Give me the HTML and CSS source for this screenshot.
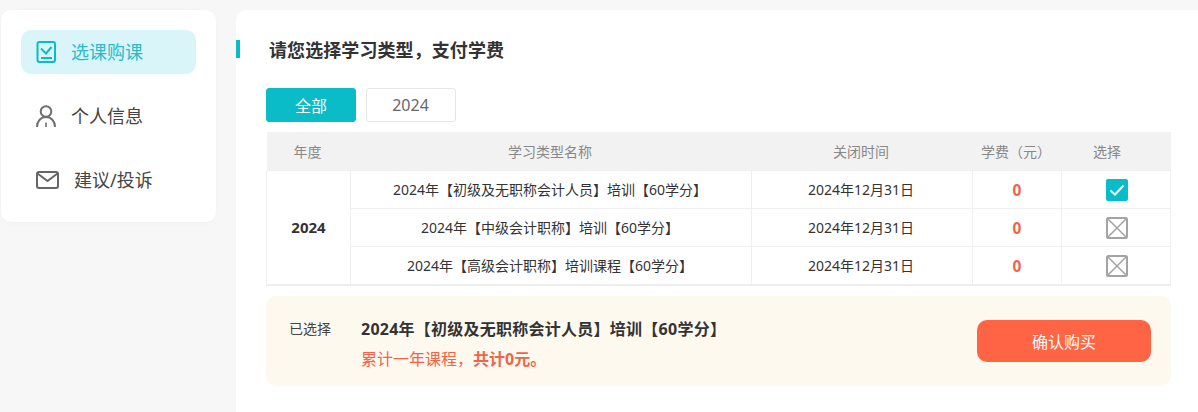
FILE: index.html
```html
<!DOCTYPE html>
<html lang="zh-CN">
<head>
<meta charset="utf-8">
<title>选课购课</title>
<link rel="stylesheet" href="styles.css">
</head>
<body>
<div class="page">
  <aside class="sidebar">
    <a class="nav-item active">
      <svg class="nav-icon" width="20" height="22" viewBox="0 0 20 22" fill="none" stroke="#0abbc8" stroke-width="2"><rect x="1.500" y="1" width="17.500" height="20" rx="2"/><path d="M5 7.500l5 5 5.500-6.500"/><path d="M5 17h11"/></svg>
      <span>选课购课</span>
    </a>
    <a class="nav-item">
      <svg class="nav-icon" width="20" height="22" viewBox="0 0 20 22" fill="none" stroke="#707070" stroke-width="2"><circle cx="10" cy="6.500" r="5.300"/><path d="M1 22C1 16 5 12 10 12s9 4 9 10"/><path d="M10 17.500V22" stroke-width="1.600"/></svg>
      <span>个人信息</span>
    </a>
    <a class="nav-item">
      <svg class="nav-icon" width="23" height="18" viewBox="0 0 23 18" fill="none" stroke="#666" stroke-width="2"><rect x="1" y="1" width="21" height="16" rx="2"/><path d="M1.500 2.500l10 7.500 10-7.500"/></svg>
      <span>建议/投诉</span>
    </a>
  </aside>
  <main class="content">
    <h2 class="title">请您选择学习类型，支付学费</h2>
    <div class="tabs">
      <button class="tab tab-on">全部</button>
      <button class="tab tab-year">2024</button>
    </div>
    <table class="grid">
      <colgroup>
        <col class="c-year"><col class="c-name"><col class="c-time"><col class="c-fee"><col class="c-pick">
      </colgroup>
      <thead>
        <tr><th>年度</th><th>学习类型名称</th><th>关闭时间</th><th>学费（元）</th><th class="th-pick">选择</th></tr>
      </thead>
      <tbody>
        <tr>
          <td rowspan="3" class="year">2024</td>
          <td>2024年【初级及无职称会计人员】培训【60学分】</td>
          <td>2024年12月31日</td>
          <td class="fee">0</td>
          <td class="pick"><svg width="22" height="22" viewBox="0 0 22 22"><rect width="22" height="22" rx="2" fill="#0abbc8"/><path d="M4.500 11.500l4.500 4 8.500-9" fill="none" stroke="#fff" stroke-width="2"/></svg></td>
        </tr>
        <tr>
          <td>2024年【中级会计职称】培训【60学分】</td>
          <td>2024年12月31日</td>
          <td class="fee">0</td>
          <td class="pick"><svg width="22" height="22" viewBox="0 0 22 22" fill="none" stroke="#a3a3a3"><rect x="1" y="1" width="20" height="20" rx="1.500" stroke-width="2"/><path d="M1.500 1.500l19 19M20.500 1.500l-19 19" stroke-width="1.500"/></svg></td>
        </tr>
        <tr>
          <td>2024年【高级会计职称】培训课程【60学分】</td>
          <td>2024年12月31日</td>
          <td class="fee">0</td>
          <td class="pick"><svg width="22" height="22" viewBox="0 0 22 22" fill="none" stroke="#a3a3a3"><rect x="1" y="1" width="20" height="20" rx="1.500" stroke-width="2"/><path d="M1.500 1.500l19 19M20.500 1.500l-19 19" stroke-width="1.500"/></svg></td>
        </tr>
      </tbody>
    </table>
    <section class="summary">
      <div class="sum-label">已选择</div>
      <div class="sum-body">
        <div class="sum-name">2024年【初级及无职称会计人员】培训【60学分】</div>
        <div class="sum-note">累计一年课程，<b>共计0元。</b></div>
      </div>
      <button class="buy">确认购买</button>
    </section>
  </main>
</div>
</body>
</html>
```
FILE: styles.css
```css
* { box-sizing: border-box; }
html, body { margin: 0; padding: 0; }
body {
  width: 1198px;
  height: 412px;
  overflow: hidden;
  background: #f7f7f7;
  font-family: "Noto Sans", "Noto Sans CJK SC", sans-serif;
  color: #333;
}
.page {
  display: flex;
  align-items: flex-start;
  gap: 20px;
  padding: 10px 0 0 1px;
}
.sidebar {
  width: 215px;
  height: 212px;
  flex: none;
  background: #fff;
  border-radius: 10px;
  padding: 20px;
  display: flex;
  flex-direction: column;
  gap: 20px;
  box-shadow: 0 1px 4px rgba(0,0,0,.03);
}
.nav-item {
  width: 175px;
  height: 44px;
  flex: none;
  display: flex;
  align-items: center;
  gap: 15px;
  padding-left: 15px;
  border-radius: 10px;
  font-size: 18px;
  color: #444;
}
.nav-item span { padding-bottom: 2px; }
.nav-item.active { background: #d9f5fa; color: #2bbcc8; }
.nav-icon { flex: none; }
.content {
  width: 962px;
  height: 402px;
  flex: none;
  background: #fff;
  border-radius: 10px 0 0 0;
  padding: 30px 27px 0 30px;
}
.title {
  margin: 0;
  position: relative;
  height: 20px;
  line-height: 20px;
  font-size: 18px;
  font-weight: 700;
  letter-spacing: .08px;
  color: #333;
  padding-left: 3px;
}
.title::before {
  content: "";
  position: absolute;
  left: -30px;
  top: 0;
  width: 4px;
  height: 18px;
  background: #0abbc8;
}
.tabs {
  display: flex;
  gap: 10px;
  margin-top: 28px;
}
.tab {
  width: 90px;
  height: 34px;
  padding: 0;
  border: 1px solid #e6e6e6;
  border-radius: 3px;
  background: #fff;
  color: #666;
  font: 16px "Noto Sans", "Noto Sans CJK SC", sans-serif;
}
.tab-year { padding-right: 1px; }
.tab-on { background: #0abbc8; border-color: #0abbc8; color: #fff; }
.grid {
  width: 904px;
  margin-top: 10px;
  border-collapse: collapse;
  table-layout: fixed;
  border-bottom: 2px solid #eee;
}
.c-year { width: 84px; }
.c-name { width: 401px; }
.c-time { width: 221px; }
.c-fee { width: 89px; }
.c-pick { width: 109px; }
th {
  height: 38px;
  padding: 0 2px 0 0;
  background: #f2f2f2;
  font-weight: 400;
  font-size: 14px;
  color: #888;
  text-align: center;
}
.th-pick { padding-right: 18px; }
td {
  height: 38px;
  padding: 0 2px 0 0;
  border: 1px solid #f0f0f0;
  text-align: center;
  font-size: 14px;
  color: #333;
}
tbody tr:last-child td { height: 39px; }
td.year { padding: 0; font-size: 15px; font-weight: 700; }
td.pick { padding: 2px 0 0 2px; }
td.fee { padding: 1px 0 0 0; font-size: 15.500px; font-weight: 700; color: #f0654a; }
.pick svg { display: block; margin: 0 auto; }
.summary {
  width: 905px;
  height: 90px;
  margin-top: 10px;
  background: #fdf9ee;
  border-radius: 10px;
  display: flex;
  align-items: flex-start;
  padding: 0 20px 0 23px;
}
.sum-label { font-size: 14px; line-height: 20px; margin-top: 23px; width: 72px; flex: none; color: #444; }
.sum-body { flex: 1; margin-top: 21px; }
.sum-name { font-size: 16px; line-height: 24px; font-weight: 700; letter-spacing: .25px; color: #333; }
.sum-note { font-size: 16px; line-height: 22px; margin-top: 7px; color: #f0654a; }
.sum-note b { font-weight: 700; }
.buy {
  width: 174px;
  height: 42px;
  margin-top: 24px;
  flex: none;
  border: 0;
  border-radius: 10px;
  background: #ff6445;
  color: #fff;
  font: 16px "Noto Sans", "Noto Sans CJK SC", sans-serif;
}
```
